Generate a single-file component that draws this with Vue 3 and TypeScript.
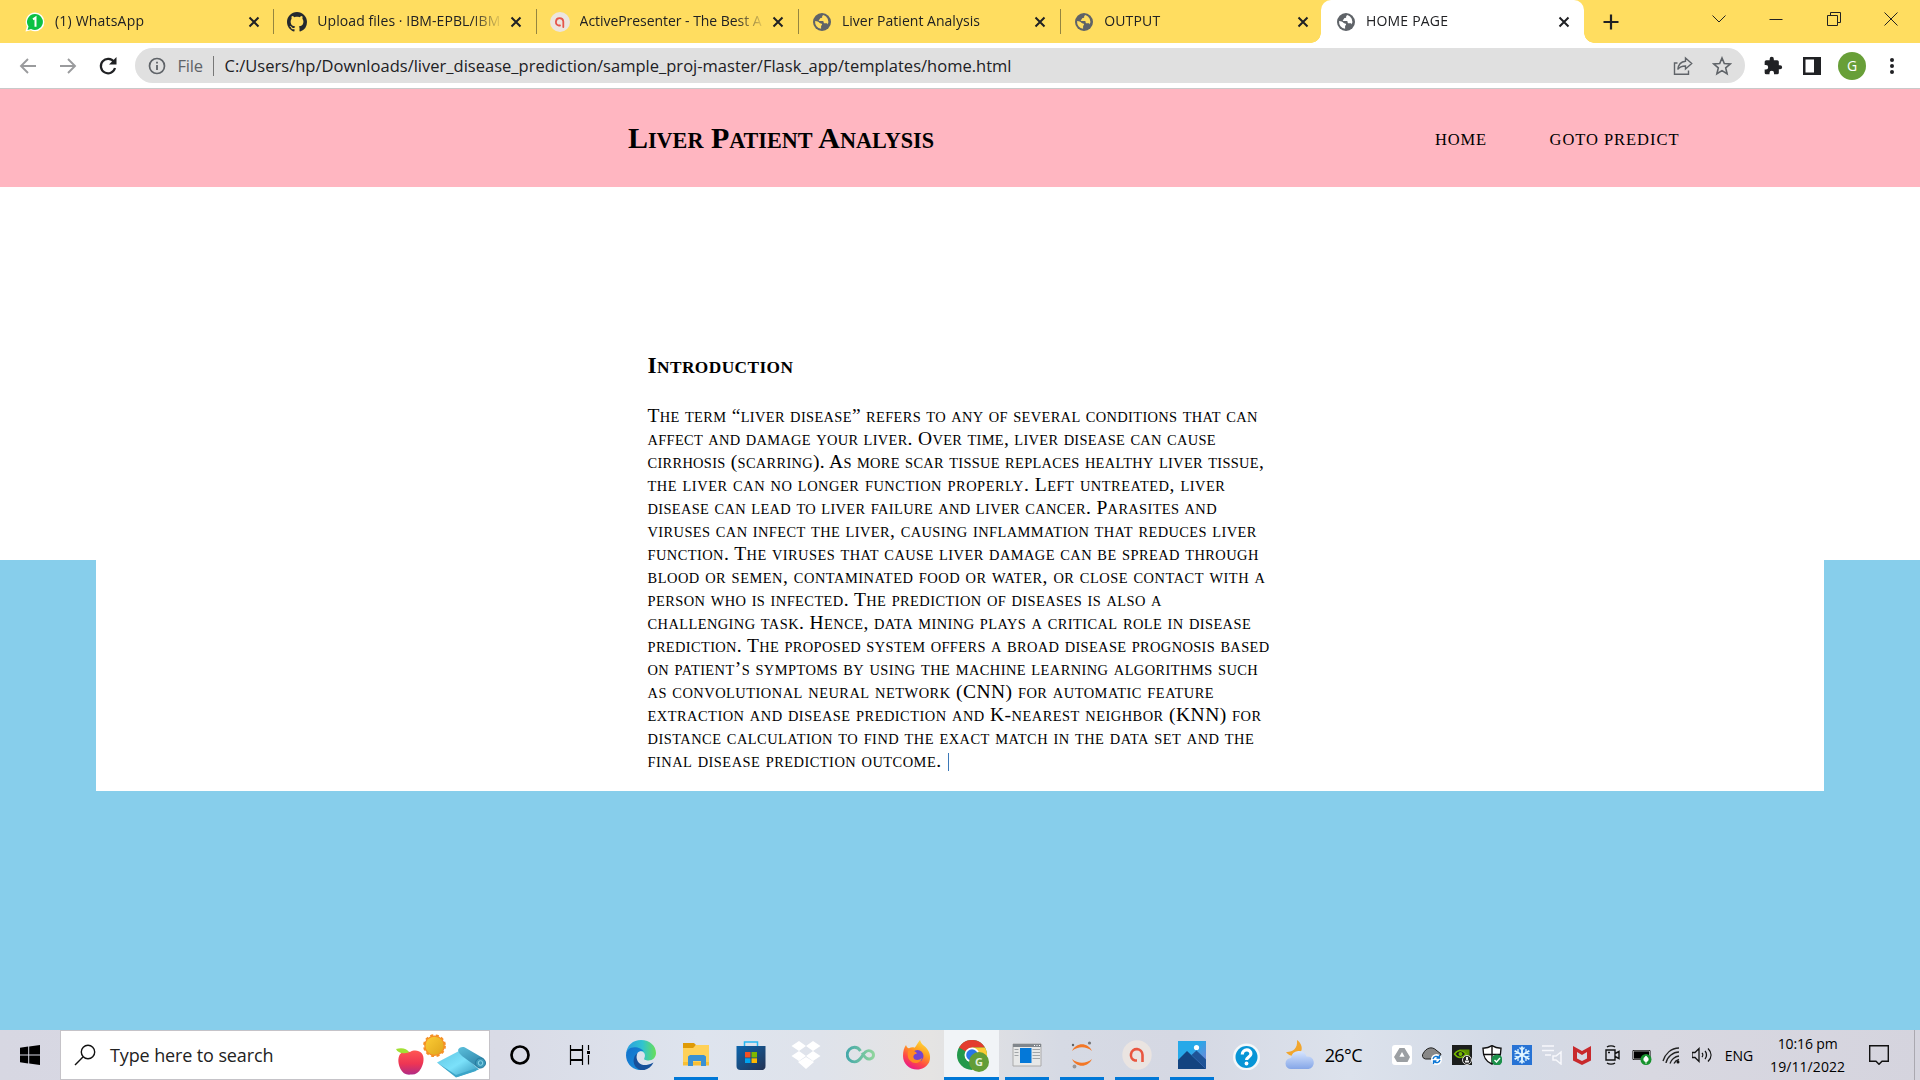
<script setup lang="ts">
interface Tab {
  title: string
  icon: 'whatsapp' | 'github' | 'presenter' | 'globe'
  active?: boolean
  width: number
}

const tabs: Tab[] = [
  { title: '(1) WhatsApp', icon: 'whatsapp', width: 89 },
  { title: 'Upload files · IBM-EPBL/IBM', icon: 'github', width: 183 },
  { title: 'ActivePresenter - The Best A', icon: 'presenter', width: 182 },
  { title: 'Liver Patient Analysis', icon: 'globe', width: 138 },
  { title: 'OUTPUT', icon: 'globe', width: 56 },
  { title: 'HOME PAGE', icon: 'globe', active: true, width: 82 },
]

interface Line {
  text: string
  width: number
}

const lines: Line[] = [
  { text: 'The term “liver disease” refers to any of several conditions that can', width: 609.8 },
  { text: 'affect and damage your liver. Over time, liver disease can cause', width: 568 },
  { text: 'cirrhosis (scarring). As more scar tissue replaces healthy liver tissue,', width: 616.2 },
  { text: 'the liver can no longer function properly. Left untreated, liver', width: 577.5 },
  { text: 'disease can lead to liver failure and liver cancer. Parasites and', width: 569 },
  { text: 'viruses can infect the liver, causing inflammation that reduces liver', width: 608.8 },
  { text: 'function. The viruses that cause liver damage can be spread through', width: 610.8 },
  { text: 'blood or semen, contaminated food or water, or close contact with a', width: 617.5 },
  { text: 'person who is infected. The prediction of diseases is also a', width: 514 },
  { text: 'challenging task. Hence, data mining plays a critical role in disease', width: 603.2 },
  { text: 'prediction. The proposed system offers a broad disease prognosis based', width: 621.5 },
  { text: 'on patient’s symptoms by using the machine learning algorithms such', width: 610.2 },
  { text: 'as convolutional neural network (CNN) for automatic feature', width: 566 },
  { text: 'extraction and disease prediction and K-nearest neighbor (KNN) for', width: 613.5 },
  { text: 'distance calculation to find the exact match in the data set and the', width: 606.2 },
  { text: 'final disease prediction outcome.', width: 293.5 },
]

// Splits a text into runs of lowercase letters and everything else.
const runs = (text: string): string[] => text.match(/[a-z]+|[^a-z]+/g) ?? []
const isSmall = (run: string): boolean => /^[a-z]/.test(run)

// Tracks a text run so that it spans the given width.
const vFit = {
  mounted(el: HTMLElement, binding: { value: number }) {
    const range = document.createRange()
    range.selectNodeContents(el)
    const count = (el.textContent ?? '').length
    el.style.letterSpacing = '0px'
    const natural = range.getBoundingClientRect().width
    el.style.letterSpacing = `${((binding.value - natural) / Math.max(1, count - 1)).toFixed(3)}px`
  },
}
</script>

<template>
  <div class="screen">
    <header class="tabstrip">
      <div v-for="t in tabs" :key="t.title" class="tab" :class="{ active: t.active }">
        <svg v-if="t.icon === 'whatsapp'" class="fav" viewBox="0 0 20 20">
          <path d="M10 .6a9.3 9.3 0 0 1 0 18.7c-1.6 0-3-.4-4.300-1.100L.5 19.500l1.400-5A9.300 9.300 0 0 1 10 .6z" fill="#fff" />
          <path d="M10 2a8 8 0 1 1-4 15l-3.500.9 1-3.300A8 8 0 0 1 10 2z" fill="#0cc143" />
          <path d="M8 7.300l2.500-1.600v9" fill="none" stroke="#fff" stroke-width="2" />
        </svg>
        <svg v-else-if="t.icon === 'github'" class="fav" viewBox="0 0 16 16">
          <path fill="#24292f" d="M8 0C3.58 0 0 3.58 0 8c0 3.54 2.29 6.53 5.47 7.59.4.07.55-.17.55-.38 0-.19-.01-.82-.01-1.49-2.01.37-2.53-.49-2.69-.94-.09-.23-.48-.94-.82-1.13-.28-.15-.68-.52-.01-.53.63-.01 1.080.58 1.230.82.72 1.210 1.870.87 2.330.66.07-.52.28-.87.51-1.070-1.780-.2-3.640-.89-3.640-3.950 0-.87.31-1.590.82-2.150-.08-.2-.36-1.020.08-2.120 0 0 .67-.21 2.200.82.64-.18 1.320-.27 2-.27s1.360.09 2 .27c1.530-1.040 2.200-.82 2.200-.82.44 1.100.16 1.920.08 2.120.51.56.82 1.270.82 2.150 0 3.070-1.870 3.750-3.650 3.950.29.25.54.73.54 1.480 0 1.070-.01 1.930-.01 2.200 0 .21.15.46.55.38A8.010 8.010 0 0 0 16 8c0-4.420-3.580-8-8-8z" />
        </svg>
        <svg v-else-if="t.icon === 'presenter'" class="fav" viewBox="0 0 20 20">
          <circle cx="10" cy="10" r="10" fill="#ece5df" />
          <path d="M10 13.500H9a3.700 3.700 0 1 1 4.300-4v5.500" fill="none" stroke="#e5554b" stroke-width="1.800" stroke-linecap="round" />
        </svg>
        <svg v-else class="fav globe" viewBox="0 0 20 20">
          <circle cx="10" cy="10" r="9" fill="#5f6368" />
          <path d="M11.500 3c-1 .5-1.500 1-1.300 2 .1.800-.7 1-1.500 1.100-.9.200-.5 1.300-1.500 1.700-.6.300-.6 1.200.3 1.200h3c1 0 1.200.7 1.200 1.500 0 .7.700.8 1.300.8h1.200c1 0 1.300.5 1.500 1.200A7 7 0 0 0 11.500 3zM3.100 9c2 .1 3.400.8 4.300 1.800.8.900 2.700.4 2.700 1.800 0 .8-1 .900-1 1.700v2.500A7 7 0 0 1 3.100 9z" :fill="t.active ? '#fff' : '#ffdd60'" />
        </svg>
        <span class="tab-title"><span v-fit="t.width">{{ t.title }}</span></span>
        <svg class="close" viewBox="0 0 12 12"><path d="M1.500 1.500l9 9M10.500 1.500l-9 9" stroke="#202124" stroke-width="2" /></svg>
      </div>
      <svg class="plus" viewBox="0 0 16 16"><path d="M8 .5v15M.5 8h15" stroke="#202124" stroke-width="2.200" /></svg>
      <div class="window-controls">
        <svg viewBox="0 0 16 16"><path d="M1.500 4.500l6.500 6.500 6.500-6.500" /></svg>
        <svg viewBox="0 0 16 16"><path d="M1.500 8.500h13" /></svg>
        <svg viewBox="0 0 16 16"><path d="M1.500 4.500h10v10h-10zM4.500 4.500v-3h10v10h-3" /></svg>
        <svg viewBox="0 0 16 16"><path d="M1.500 1.500l13 13M14.500 1.500l-13 13" /></svg>
      </div>
    </header>

    <div class="toolbar">
      <svg class="nav-arrow" viewBox="0 0 20 20"><path d="M18 10H3M10 3l-7 7 7 7" /></svg>
      <svg class="nav-arrow" viewBox="0 0 20 20"><path d="M2 10h15M10 3l7 7-7 7" /></svg>
      <svg class="reload" viewBox="0 0 20 20">
        <path d="M16 6a7.200 7.200 0 1 0 1 6" fill="none" stroke="#202124" stroke-width="2.200" />
        <path d="M18.500 1v7.500H11z" fill="#202124" />
      </svg>
      <div class="omnibox">
        <svg class="info" viewBox="0 0 18 18">
          <circle cx="9" cy="9" r="7.500" fill="none" stroke="#5f6368" stroke-width="1.700" />
          <path d="M9 8v5M9 4.700v1.900" stroke="#5f6368" stroke-width="1.800" />
        </svg>
        <span class="scheme">File</span>
        <span class="divider"></span>
        <span class="url"><span v-fit="787">C:/Users/hp/Downloads/liver_disease_prediction/sample_proj-master/Flask_app/templates/home.html</span></span>
        <svg class="share" viewBox="0 0 20 20" fill="none" stroke="#5f6368" stroke-width="1.400">
          <path d="M4.500 7H1.500v11.300h14V14.500" />
          <path d="M12.500 2l6.200 5.500-6.200 5.500V10c-3.500 0-6 .8-7.700 3.500C5.300 8.700 8 5.600 12.500 5.200z" />
        </svg>
        <svg class="star" viewBox="0 0 20 20"><path d="M10 2l2.300 5.500 5.900.5-4.500 3.900 1.400 5.800L10 14.600l-5.100 3.100 1.400-5.800L1.800 8l5.900-.5z" fill="none" stroke="#5f6368" stroke-width="1.600" /></svg>
      </div>
      <svg class="puzzle" viewBox="0 0 24 24"><path fill="#202124" d="M20.500 11H19V7a2 2 0 0 0-2-2h-4V3.500a2.500 2.500 0 0 0-5 0V5H4a2 2 0 0 0-2 2v3.800h1.500a2.700 2.700 0 0 1 0 5.400H2V20a2 2 0 0 0 2 2h3.800v-1.500a2.700 2.700 0 0 1 5.400 0V22H17a2 2 0 0 0 2-2v-4h1.500a2.500 2.500 0 0 0 0-5z" /></svg>
      <svg class="panel" viewBox="0 0 18 18"><path fill="#202124" fill-rule="evenodd" d="M0 0h18v18H0zM2.500 2.500v13H11v-13z" /></svg>
      <span class="avatar">G</span>
      <svg class="dots" viewBox="0 0 4 18"><circle cx="2" cy="3" r="2" /><circle cx="2" cy="9" r="2" /><circle cx="2" cy="15" r="2" /></svg>
    </div>

    <main class="page">
      <nav class="site-nav">
        <h1><span v-fit="306"><span v-for="(r, k) in runs('Liver Patient Analysis')" :key="k" :class="{ small: isSmall(r) }">{{ r }}</span></span></h1>
        <a class="home"><span v-fit="51">HOME</span></a>
        <a class="predict"><span v-fit="129">GOTO PREDICT</span></a>
      </nav>
      <div class="hero"></div>
      <section class="article">
        <h3><span v-fit="145.500"><span v-for="(r, k) in runs('Introduction')" :key="k" :class="{ small: isSmall(r) }">{{ r }}</span></span></h3>
        <p>
          <span v-for="(l, i) in lines" :key="i" class="line"><span v-fit="l.width"><span v-for="(r, k) in runs(l.text)" :key="k" :class="{ small: isSmall(r) }">{{ r }}</span></span><i v-if="i === lines.length - 1" class="caret"></i></span>
        </p>
      </section>
    </main>

    <footer class="taskbar">
      <div class="start">
        <svg viewBox="0 0 20 20"><path d="M0 2.700l8.200-1.100v7.900H0zM9.200 1.400L20 0v9.500H9.200zM0 10.500h8.200v7.900L0 17.300zM9.200 10.500H20V20L9.200 18.600z" /></svg>
      </div>
      <div class="search">
        <svg class="magnifier" viewBox="0 0 22 22"><circle cx="14" cy="8" r="6.700" /><path d="M9.200 12.800L1 21" /></svg>
        <span class="hint"><span v-fit="163.500">Type here to search</span></span>
        <svg class="art" viewBox="0 0 92 48">
          <defs>
            <linearGradient id="apple" x2="0" y2="1"><stop stop-color="#ff5752" /><stop offset=".55" stop-color="#ee3554" /><stop offset="1" stop-color="#b02b86" /></linearGradient>
            <linearGradient id="sun" x2="1" y2="1"><stop stop-color="#fccd36" /><stop offset="1" stop-color="#dfa51c" /></linearGradient>
            <linearGradient id="mat" x2="1" y2="1"><stop stop-color="#5fc5e2" /><stop offset=".5" stop-color="#7be1fa" /><stop offset="1" stop-color="#2f8fb5" /></linearGradient>
            <linearGradient id="roll" x2=".6" y2="1"><stop stop-color="#5cc0dc" /><stop offset="1" stop-color="#2d83a8" /></linearGradient>
          </defs>
          <path d="M14 20c4-2.500 9-1.700 11.500 1 3.300 3.900 2.300 10.500-.5 15.500-2.500 4.500-6 6.500-10 6-5 .8-8.500-1.500-10.500-5.500-2.500-5-3-11-.5-14.700C6.500 19 10.500 18.500 14 20z" fill="url(#apple)" />
          <path d="M13 20.500c-2-4-7-5-13-3.500C1.500 20.500 6 22.500 13 20.500z" fill="#a2e034" />
          <circle cx="38.500" cy="13.700" r="10.300" fill="#f59025" stroke="#f59025" stroke-width="2.200" stroke-dasharray="3 2.500" />
          <circle cx="38.500" cy="13.700" r="9" fill="url(#sun)" />
          <path d="M41 30.500L63 19l20 18.500L61 45z" fill="url(#mat)" />
          <path d="M41 30.500L60 43l21-7-1 3-20 6.500z" fill="#3ca5c8" />
          <path d="M62 18c1-2.500 4-3.500 7-2.500l18 10.500c4 4 1 10-4 10.500L66 24c-1.500-2-3.500-3-4-6z" fill="url(#roll)" />
          <circle cx="84.500" cy="31" r="5" fill="#3c99ba" stroke="#267b9e" />
          <circle cx="84.500" cy="31" r="2.300" fill="none" stroke="#8bd8ea" />
        </svg>
      </div>
      <div class="task wide"><svg viewBox="0 0 30 30"><circle cx="15" cy="15" r="8.500" fill="none" stroke="#000" stroke-width="2.700" /></svg></div>
      <div class="task view"><svg viewBox="0 0 30 30" fill="none" stroke="#000" stroke-width="1.200"><path d="M5.500 5v4.500h12V5M5.500 25v-4.500h12V25M5.500 10.500h12v9h-12zM23.500 5v5M23.500 15v9.500" /><path d="M22 11h3v3h-3z" fill="#000" stroke="none" /></svg></div>
      <div class="task"><svg viewBox="0 0 30 30">
        <defs>
          <linearGradient id="e1" x2="1"><stop stop-color="#2b9de0" /><stop offset=".55" stop-color="#31c3cf" /><stop offset="1" stop-color="#68df57" /></linearGradient>
          <linearGradient id="e2" x2="1" y2="1"><stop stop-color="#1270cb" /><stop offset="1" stop-color="#1991dc" /></linearGradient>
        </defs>
        <path d="M0 14C1 5 7 0 15 0c9 0 15 6 15 13 0 4.500-3.300 7.500-7.500 7.500-3 0-5-1-4.200-2.300 2-4-.5-7.200-4.800-7.200C8 11 2 11 0 14z" fill="url(#e1)" />
        <path d="M0 15c.5-5 4-7.700 8.500-7.700 4 0 8 2 9.500 4.200-4-1.500-8 1-8 6 0 6 4.500 11 9.500 12C9 32.500 0 25 0 15z" fill="url(#e2)" />
        <path d="M11.500 13c-3 6 1.500 13 9 12 3-.3 5-1.500 7-2.500C25 27.500 20 31 14.500 30 7 28 5 18 11.500 13z" fill="#16509b" />
      </svg></div>
      <div class="task open"><svg viewBox="0 0 30 30">
        <path d="M2 3h11l2 2-2 3H2z" fill="#df9a05" /><path d="M2 8h10l3-3h13v20H2z" fill="#ffd158" /><path d="M2 22h26v3.500H2z" fill="#f8bf36" />
        <path d="M7 26V16.500L9 15h14l2 1.500V26h-5v-5h-8v5z" fill="#3a91d4" />
      </svg></div>
      <div class="task"><svg viewBox="0 0 30 30">
        <defs><linearGradient id="st" x2="1" y2="1"><stop stop-color="#0b65ad" /><stop offset="1" stop-color="#253353" /></linearGradient></defs>
        <path d="M8.500 7V2h13v5" fill="none" stroke="#27b7f2" stroke-width="1.500" /><path d="M.5 6h29v20a4 4 0 0 1-4 4h-21a4 4 0 0 1-4-4z" fill="url(#st)" />
        <path d="M9 12h5.500v5.500H9z" fill="#f25022" /><path d="M15.500 12H21v5.500h-5.500z" fill="#7fba00" /><path d="M9 18.300h5.500V23H9z" fill="#00a4ef" /><path d="M15.500 18.300H21V23h-5.500z" fill="#ffb900" />
      </svg></div>
      <div class="task"><svg viewBox="0 0 30 30" fill="#fff"><path d="M8 1l7 5-7 5-7.500-5zM22 1l7.500 5L22 11l-7-5zM8 11l7 5-7 5-7.500-5zM22 11l7.500 5-7.500 5-7-5zM7 22l8-5 8 5-8 7z" /></svg></div>
      <div class="task"><svg viewBox="0 0 30 30">
        <defs><linearGradient id="inf" x2="1"><stop stop-color="#45a9a9" /><stop offset="1" stop-color="#8ed49c" /></linearGradient></defs>
        <path d="M14.500 11C13 8.500 11 7.300 8.500 7.300a7.200 7.200 0 0 0 0 14.600c6 0 7.500-7 11-10 3.500-2.700 8-.5 8 3s-4.500 5.500-7.500 3c-1.500-1.200-2.500-3-4-5" fill="none" stroke="url(#inf)" stroke-width="2.900" />
      </svg></div>
      <div class="task"><svg viewBox="0 0 30 30">
        <defs><linearGradient id="ff" x1=".8" x2=".3" y2="1"><stop stop-color="#ffe23f" /><stop offset=".4" stop-color="#ff9e20" /><stop offset=".7" stop-color="#ff4a45" /><stop offset="1" stop-color="#e8168d" /></linearGradient></defs>
        <path d="M4 5c.5 2 1.500 3 3 3.200 2-1 4-1 5.500-.5 2-1.500 3-5 5.500-7.700.5 3 3 5 5.500 7 5 5 5.500 11 3.500 15.500C24.500 27 20 29.500 15 29.500 7 29.500 1 23.500 1 16c0-5 1-8 3-11z" fill="url(#ff)" />
        <circle cx="15.500" cy="16" r="6" fill="#7345cf" /><path d="M6 11c3-1 8 0 9 2.500-2 .5-4 1.500-3.500 4 1 3.500 6 3 8.500.5-1 5-8 7-12 2.500C5.500 18 5.500 14 6 11z" fill="#ff8c22" />
      </svg></div>
      <div class="task open current"><svg class="chrome" viewBox="0 0 32 32">
        <circle cx="15" cy="15" r="15" fill="#23994b" /><path d="M15 15L2 7.500A15 15 0 0 1 28 7.500H15z" fill="#e33c2e" /><path d="M15 7.500h13A15 15 0 0 1 15 30l6.500-11z" fill="#fecd34" />
        <circle cx="15" cy="15" r="7.500" fill="#fff" /><circle cx="15" cy="15" r="5.800" fill="#2876e8" />
        <circle cx="22" cy="22" r="10" fill="#639d37" /><text x="22" y="26" text-anchor="middle" font-size="11" font-weight="700" fill="#e5f0db">G</text>
      </svg></div>
      <div class="task open"><svg viewBox="0 0 30 30"><path d="M1 4h28v22H1z" fill="#e7e8e8" stroke="#aaa" /><path d="M1 4h28v3H1z" fill="#80868c" /><path d="M8 8h11.500v15H8z" fill="#0478d8" /><path d="M2.500 9.500h4M2.500 12.500h4M2.500 15.500h4M20.500 9.500H28M20.500 12.500H28M20.500 15.500H28M20.500 18.500H28" stroke="#a1a5a8" /><path d="M22 5.500h1M24.500 5.500h1M27 5.500h1" stroke="#fff" /></svg></div>
      <div class="task open"><svg viewBox="0 0 30 30"><path d="M5 11c4-9 16-9 20 0-6-5-14-5-20 0zM5 19c4 9 16 9 20 0-6 5-14 5-20 0z" fill="#f37726" /><circle cx="6" cy="5" r="1.200" fill="#616262" /><circle cx="22.500" cy="3" r="1.600" fill="#767677" /><circle cx="7.500" cy="26.500" r="1.900" fill="#989798" /></svg></div>
      <div class="task open"><svg viewBox="0 0 30 30"><circle cx="15" cy="15" r="14.700" fill="#eae4e1" /><path d="M15 20.500h-2a5.800 5.800 0 1 1 7.500-5.800V22" fill="none" stroke="#e9563f" stroke-width="2.600" /></svg></div>
      <div class="task open"><svg viewBox="0 0 30 30"><defs><linearGradient id="ph" x2="1" y2="1"><stop offset=".4" stop-color="#27a9e9" /><stop offset="1" stop-color="#8a7cd1" /></linearGradient></defs><path d="M1 1h28v28H1z" fill="url(#ph)" /><path d="M1 20l9-9 19 18H1z" fill="#134480" /><path d="M14.500 15l5-4.500 9.500 9V29z" fill="#1f5396" /><circle cx="19.500" cy="7.500" r="2.600" fill="#fff" /></svg></div>
      <div class="task"><svg viewBox="0 0 30 30"><circle cx="14.500" cy="17" r="13.500" fill="#f4f8fa" /><circle cx="14.500" cy="17" r="11" fill="#0795d6" /><path d="M10.300 14.500c0-6 9-6 8.600-.5-.2 3-4.300 3-4.300 6" fill="none" stroke="#fff" stroke-width="3.200" /><circle cx="14.500" cy="23.500" r="1.900" fill="#fff" /></svg></div>
      <div class="weather">
        <svg viewBox="0 0 30 30"><path d="M12 0c4.500 3 6.500 9 3 13-3.500 4-10.500 4-14-1 6 .5 12-3 11-12z" fill="#f1a62e" /><defs><linearGradient id="cl" x2="0" y2="1"><stop stop-color="#d8e6ff" /><stop offset="1" stop-color="#85a6e7" /></linearGradient></defs><path d="M6 29a5.500 5.500 0 0 1 0-11 8 8 0 0 1 15.500-1.500A6.300 6.300 0 1 1 23.500 29z" fill="url(#cl)" /></svg>
        <span class="degrees"><span v-fit="38">26°C</span></span>
      </div>
      <div class="tray">
        <svg viewBox="0 0 20 20"><rect width="20" height="20" rx="3" fill="#fff" /><path d="M7.500 3h5l5.500 9-2.500 5H5l-3-5zM10 7l-2.600 4.700h5.200z" fill="#9b9fa3" fill-rule="evenodd" /></svg>
        <svg viewBox="0 0 20 20"><path d="M3.500 14A3.500 3.500 0 0 1 1.500 8C4 3 10 1 14 5l5 4-2 5z" fill="#888" stroke="#222" /><circle cx="14.500" cy="14.500" r="5.500" fill="#fff" /><path d="M11 14a3.500 3.500 0 0 1 6-1.500M18 15a3.500 3.500 0 0 1-6 1.500M17.500 10v3h-3M11.500 19v-3h3" fill="none" stroke="#0b76d5" stroke-width="1.300" /></svg>
        <svg viewBox="0 0 20 20"><path d="M0 0h20v20H0z" fill="#1b1e1c" /><path d="M7.500 4.500h10V13h-10z" fill="#5d9200" /><path d="M2.500 9c4-5 8-4 11.500 0-3 4-8 5-11.500 0z" fill="#1b1e1c" stroke="#76b900" stroke-width="1.500" /><circle cx="8.500" cy="9" r="2" fill="#76b900" /><circle cx="15" cy="15" r="4.500" fill="#222" stroke="#ddd" /><path d="M13 17.500h4v-2h-4zM14 12h2v3h-2z" fill="#eee" /></svg>
        <svg viewBox="0 0 20 20"><path d="M10 .7c3 2 6 2.500 9 2.500 0 8-2 13-9 16-7-3-9-8-9-16 3 0 6-.5 9-2.500z" fill="#fff" stroke="#111" stroke-width="1.400" /><path d="M10 1v18M1 9.500h18" stroke="#111" stroke-width="1.400" /><circle cx="15" cy="15" r="5.500" fill="#1c914a" /><path d="M12.500 15l2 2 3.500-4" fill="none" stroke="#fff" stroke-width="1.400" /></svg>
        <svg viewBox="0 0 20 20"><path d="M0 0h20v20H0z" fill="#2773d5" /><path d="M10 1.500v17M2.600 5.800l14.800 8.400M17.400 5.800L2.600 14.200" stroke="#e5f7ff" stroke-width="1.800" /><path d="M7.500 2.500L10 5l2.500-2.500M7.500 17.500L10 15l2.500 2.500M2.500 9L6 8V4M17.500 9L14 8V4M2.500 11L6 12v4M17.500 11l-3.500 1v4" fill="none" stroke="#d7f2ff" stroke-width="1.300" /></svg>
        <svg viewBox="0 0 20 20" fill="none" stroke="#f7f8fc" stroke-width="1.500"><path d="M0 1h12M0 5.500h12M3 10h6M11 11h3l5-4v12l-5-4h-3z" /></svg>
        <svg viewBox="0 0 20 20"><path d="M1 1l9 5 9-5v14.500L10 20l-9-4.500zM5 7v6.500l5 2.500 5-2.500V7l-5 3z" fill="#c8292c" fill-rule="evenodd" /></svg>
        <svg viewBox="0 0 20 20" fill="none" stroke="#111" stroke-width="1.400"><path d="M4 5h9v10H4zM13 8.500l4-2v7l-4-2M5 2c2-1.500 6-1.500 8 0M5 18c2 1.500 6 1.500 8 0M6 7.500h2" /></svg>
        <svg viewBox="0 0 20 20"><path d="M1 5.500h17v9H1z" fill="#000" stroke="#000" /><path d="M1.500 6h16v8h-16z" fill="none" stroke="#fff" stroke-width=".6" /><circle cx="14" cy="14.500" r="5.500" fill="#16932d" /><path d="M14 11c3 2 3 5 0 6-3-1-3-4 0-6zM14 14v5" fill="#fff" stroke="#fff" stroke-width=".7" /></svg>
        <svg viewBox="0 0 20 20" fill="none" stroke="#222" stroke-width="1.300"><path d="M1 16C3 9 9 3 17 3M4 18c1-6 7-11 13-11M8 18.500c1-4 5-7 9-7.500M12 18.500c1-2 3-3.500 5-4" /><circle cx="16" cy="17" r="1.500" fill="#111" stroke="none" /></svg>
        <svg viewBox="0 0 20 20" fill="none" stroke="#111" stroke-width="1.300"><path d="M0 7.500h3l4-4v13l-4-4H0zM10 8c1 1 1 3 0 4M13 6c2 2 2 6 0 8M16 3.500c4 4 4 9 0 13" /></svg>
      </div>
      <span class="lang"><span v-fit="28.500">ENG</span></span>
      <div class="clock"><span v-fit="60">10:16 pm</span><span v-fit="75">19/11/2022</span></div>
      <svg class="notice" viewBox="0 0 20 20"><path d="M.7.700h18.600v15.600H13l-3 3-3-3H.7z" fill="none" stroke="#111" stroke-width="1.400" /></svg>
      <span class="peek"></span>
    </footer>
  </div>
</template>

<style>
body { overflow: hidden; background: #fff; }
</style>

<style scoped>
* { box-sizing: border-box; }
svg { display: block; flex: none; }
.screen { width: 1920px; height: 1080px; display: flex; flex-direction: column; overflow: hidden; font-family: "Open Sans", "Noto Sans", sans-serif; }

.tabstrip { height: 43px; flex: none; background: #ffdd60; display: flex; align-items: center; padding-left: 12px; }
.tab { position: relative; width: 262.300px; height: 43px; flex: none; display: flex; align-items: center; padding-left: 13px; }
.tab:not(.active)::after { content: ""; position: absolute; right: 0; top: 9px; width: 1px; height: 25px; background: #95853f; }
.tab:nth-child(5)::after { display: none; }
.tab.active { background: #fff; border-radius: 10px 10px 0 0; width: 263px; margin-left: -2px; padding-left: 14.500px; }
.tab.active::before, .tab.active::after { content: ""; position: absolute; bottom: 0; width: 10px; height: 10px; }
.tab.active::before { left: -10px; background: radial-gradient(circle at 0 0, transparent 9.500px, #fff 10px); }
.tab.active::after { right: -10px; background: radial-gradient(circle at 100% 0, transparent 9.500px, #fff 10px); }
.fav { width: 20px; height: 20px; }
.tab-title { width: 184px; margin: -2px 0 0 10px; font-size: 14px; line-height: 20px; color: #202124; white-space: nowrap; -webkit-mask-image: linear-gradient(90deg, #000 155px, transparent 186px); mask-image: linear-gradient(90deg, #000 155px, transparent 186px); }
.close { width: 12px; height: 12px; margin-left: 8.500px; }
.active .close { margin-left: 8px; }
.plus { width: 16px; height: 16px; margin-left: 18.500px; }
.window-controls { display: flex; gap: 41.400px; margin: -6px 0 0 92px; }
.window-controls svg { width: 16px; height: 16px; fill: none; stroke: #222; stroke-width: 1; }

.toolbar { height: 46px; flex: none; background: #fff; border-bottom: 1px solid #c9c9c9; display: flex; align-items: center; padding-left: 17.500px; }
.nav-arrow { width: 20px; height: 20px; margin-right: 20px; fill: none; stroke: #9a9b9d; stroke-width: 1.900; }
.reload { width: 20px; height: 20px; }
.omnibox { width: 1610px; height: 35px; margin-left: 17.500px; border-radius: 18px; background: #e0e0e0; display: flex; align-items: center; padding-left: 13px; font-size: 16.500px; color: #202124; }
.info { width: 18px; height: 18px; }
.scheme { margin-left: 11.500px; width: 35px; color: #5f6368; letter-spacing: -.2px; }
.divider { width: 1px; height: 20px; background: #777; }
.url { width: 1437px; margin-left: 11px; white-space: nowrap; }
.share { width: 20px; height: 20px; margin-left: 11px; }
.star { width: 20px; height: 20px; margin-left: 19.500px; }
.puzzle { width: 20px; height: 20px; margin-left: 17.500px; }
.panel { width: 18px; height: 18px; margin-left: 20.500px; }
.avatar { width: 28px; height: 28px; margin-left: 17px; border-radius: 50%; background: #689f38; color: #fff; font-size: 14px; display: flex; align-items: center; justify-content: center; }
.dots { width: 4px; height: 18px; margin-left: 23.500px; fill: #202124; }

.page { height: 941px; flex: none; background: #87ceeb; font-family: "Liberation Serif", "Times New Roman", serif; color: #000; display: flex; flex-direction: column; }
.small { font-size: .74em; line-height: 0; text-transform: uppercase; }
.site-nav { height: 98px; flex: none; background: #ffb6c1; display: flex; align-items: center; padding-left: 628px; }
.site-nav h1 { width: 807px; margin: 0; font-size: 30px; line-height: 34px; white-space: nowrap; }
.site-nav a { margin-top: 4px; font-size: 16.500px; white-space: nowrap; }
.site-nav .home { width: 114.500px; }
.hero { height: 373px; margin-bottom: -373px; background: #fff; }
.article { width: 1728px; height: 604px; flex: none; margin: 0 auto; padding: 165px 0 0 551.500px; background: #fff; }
.article h3 { margin: 0; font-size: 23.400px; line-height: 27px; }
.article p { margin: 25px 0 0; font-size: 19.500px; line-height: 23px; }
.line { display: block; height: 23px; white-space: nowrap; }
.caret { display: inline-block; width: 1px; height: 18px; margin: -5px 0 0 6px; background: #3b78b8; vertical-align: -4px; }

.taskbar { height: 50px; flex: none; display: flex; align-items: center; background: linear-gradient(90deg, #d7d7e2 0, #d9dbe6 500px, #dee4ee 700px, #dfe3eb 820px, #e5e4e3 930px, #d6dae4 1060px, #d5d8e3 1180px, #dce2ec 1350px, #d3dae6 1500px, #d8d8e1 1650px, #d5d4de 1920px); }
.start { width: 60px; padding-left: 20px; flex: none; }
.start svg { width: 20px; height: 20px; }
.search { width: 430px; height: 50px; flex: none; border: 1px solid #c5c3c8; background: #fff; display: flex; align-items: center; padding-left: 13px; }
.hint { width: 285px; margin-left: 14px; font-size: 18px; color: #222; white-space: nowrap; }
.magnifier { width: 22px; height: 22px; fill: none; stroke: #111; stroke-width: 1.400; }
.art { width: 92px; height: 48px; margin: 2px 0 0 1px; }
.task { position: relative; width: 55.100px; height: 50px; flex: none; display: flex; align-items: center; justify-content: center; }
.task svg { width: 30px; height: 30px; }
.task.wide { width: 60px; }
.task.view { width: 60px; margin-right: 3.500px; }
.task.open::after { content: ""; position: absolute; left: 5.500px; right: 5.500px; bottom: 0; height: 3px; background: #0078d7; }
.task.current { background: #f1f4f7; }
.task.current::after { left: 0; right: 0; }
.task svg.chrome { width: 32px; height: 32px; margin: 2px 0 0 2px; }
.weather { width: 107px; flex: none; display: flex; align-items: center; margin-left: 10px; font-size: 18px; }
.weather svg { width: 30px; height: 30px; }
.degrees { margin-left: 10px; }
.tray { display: flex; gap: 10px; flex: none; }
.tray svg { width: 20px; height: 20px; }
.lang { margin-left: 13px; width: 41px; font-size: 14px; flex: none; }
.clock { width: 84px; flex: none; display: flex; flex-direction: column; align-items: center; font-size: 14px; line-height: 23px; white-space: nowrap; }
.notice { width: 20px; height: 20px; margin-left: 19px; }
.peek { width: 1px; height: 50px; margin-left: 25px; background: #aaa8b0; }
</style>
